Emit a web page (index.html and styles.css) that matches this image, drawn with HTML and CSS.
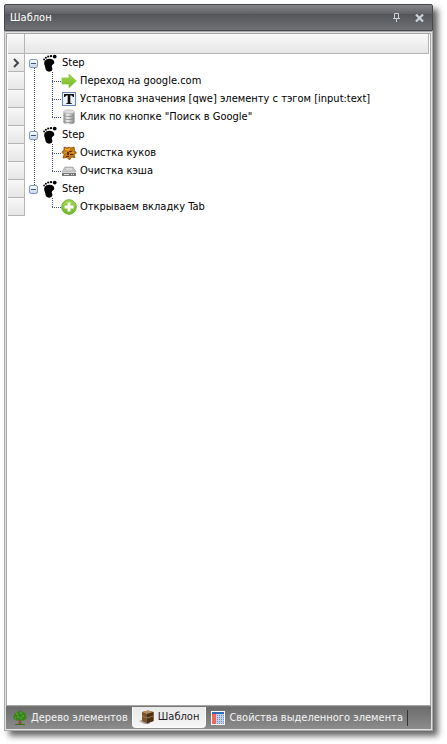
FILE: index.html
```
<!DOCTYPE html>
<html lang="ru">
<head>
<meta charset="utf-8">
<title>Шаблон</title>
<link rel="stylesheet" href="styles.css">
</head>
<body>
<svg width="0" height="0" class="defs" aria-hidden="true">
  <defs>
    <linearGradient id="green" x1="0" y1="0" x2="0" y2="1"><stop offset="0" stop-color="#a8d84a"/><stop offset="1" stop-color="#6fb52a"/></linearGradient>
    <linearGradient id="metal" x1="0" y1="0" x2="1" y2="0"><stop offset="0" stop-color="#8c8c8c"/><stop offset=".35" stop-color="#f2f2f2"/><stop offset="1" stop-color="#858585"/></linearGradient>
    <symbol id="foot" viewBox="1 0 16 18">
      <path d="M6.2 5C9.200 4.400 12.300 5.600 12.300 8.300c0 1.800-2.200 2.200-2.500 3.700-.2 1.300 1 2 .6 3.600C10 17.200 8 17.900 6.200 17.600 4.200 17.200 3.400 15.600 3.300 13.600 3.200 11.500 1.800 10.200 2.200 8.200 2.600 6.400 4.200 5.300 6.200 5z" fill="#000"/>
      <circle cx="12.700" cy="2.600" r="1.900"/><circle cx="9" cy="2.100" r="1.200"/><circle cx="6.200" cy="2.500" r="1.100"/><circle cx="3.900" cy="3.800" r="1"/><circle cx="2.100" cy="5.500" r=".9"/>
    </symbol>
  </defs>
</svg>
<main class="panel">
  <header class="title">
    <h1>Шаблон</h1>
    <button type="button" aria-label="Закрепить"><svg width="9" height="11" viewBox="0 0 9 11"><path d="M2.500 6V1.500h4V6M1 6.500h7M4.500 7v3" fill="none" stroke="#ccd2da"/></svg></button>
    <button type="button" aria-label="Закрыть"><svg width="9" height="8" viewBox="0 0 9 8"><path d="M1 .5l7 7M8 .5l-7 7" fill="none" stroke="#ccd2da" stroke-width="2.200"/></svg></button>
  </header>
  <div class="frame">
    <section class="list">
      <div class="head"><span class="corner"></span></div>
      <div class="row">
        <span class="cell"><svg width="7" height="10" viewBox="0 0 7 10"><path d="M1 1l4 4-4 4" fill="none" stroke="#444" stroke-width="2"/></svg></span>
        <span class="guide from"><button type="button" class="toggle" aria-label="Свернуть"></button></span>
        <svg class="foot"><use href="#foot"/></svg><span class="label">Step</span>
      </div>
      <div class="row">
        <span class="cell"></span><span class="guide through"></span><span class="guide through branch"></span>
        <svg class="icon" viewBox="0 0 16 16"><path d="M1 5h7V1.200L15.300 8 8 14.800V11H1z" fill="url(#green)" stroke="#86c23a" stroke-width=".7"/></svg>
        <span class="label">Переход на google.com</span>
      </div>
      <div class="row">
        <span class="cell"></span><span class="guide through"></span><span class="guide through branch"></span>
        <svg class="icon" viewBox="0 0 16 16"><rect x="1.500" y="1.500" width="13" height="13" fill="#edf3fa" stroke="#6689bd"/><path d="M3 3h10v3h-1Q11.500 4.200 9.300 4.200V12l1.700.4v.6H5v-.6l1.700-.4V4.200Q4.500 4.200 4 6H3z" fill="#111"/></svg>
        <span class="label">Установка значения [qwe] элементу с тэгом [input:text]</span>
      </div>
      <div class="row">
        <span class="cell"></span><span class="guide through"></span><span class="guide to branch"></span>
        <svg class="icon" viewBox="0 0 16 16"><path d="M2.500 3v10.500c0 2.500 11 2.500 11 0V3z" fill="url(#metal)"/><path d="M2.500 6c0 2 11 2 11 0M2.500 9c0 2 11 2 11 0M2.500 12c0 2 11 2 11 0" fill="none" stroke="#888" stroke-width=".8"/><ellipse cx="8" cy="2.800" rx="5.500" ry="1.900" fill="#ddd" stroke="#aaa" stroke-width=".6"/></svg>
        <span class="label">Клик по кнопке "Поиск в Google"</span>
      </div>
      <div class="row">
        <span class="cell"></span><span class="guide through"><button type="button" class="toggle" aria-label="Свернуть"></button></span>
        <svg class="foot"><use href="#foot"/></svg><span class="label">Step</span>
      </div>
      <div class="row">
        <span class="cell"></span><span class="guide through"></span><span class="guide through branch"></span>
        <svg class="icon" viewBox="0 0 16 16"><path d="M3 2l3 1 2-1 2 1 3-1 .5 3.500L15.500 8 13 9.500l1 3-3.500-.5L8.500 15 6 12.500l-4 .5 1-3.500L.8 7 3 5z" fill="#c57812" stroke="#8d4d08" stroke-width=".8"/><path d="M4 4l3 1 2-1.500" stroke="#f4b83c" stroke-width="1.200" fill="none"/><path d="M3 8l3-1M10 7l3 1" stroke="#e09a26" stroke-width="1.200" fill="none"/><path d="M6 7h2v3H6zM9 9h3v1H9zM8 6h3v1H8zM5 11h3v1H5z" fill="#5b2c05"/></svg>
        <span class="label">Очистка куков</span>
      </div>
      <div class="row">
        <span class="cell"></span><span class="guide through"></span><span class="guide to branch"></span>
        <svg class="icon" viewBox="0 0 16 16"><path d="M4 4h8l3 5H1z" fill="#c4c4c4" stroke="#999" stroke-width=".6"/><path d="M1 9h14v4H1z" fill="#777"/><path d="M1 9.300h14" stroke="#f0f0f0"/><path d="M3 11.500h5M10 11.500h1M12 11.500h1" stroke="#e5e5e5"/><path d="M5 6h6" stroke="#f2f2f2"/></svg>
        <span class="label">Очистка кэша</span>
      </div>
      <div class="row">
        <span class="cell"></span><span class="guide to"><button type="button" class="toggle" aria-label="Свернуть"></button></span>
        <svg class="foot"><use href="#foot"/></svg><span class="label">Step</span>
      </div>
      <div class="row">
        <span class="cell"></span><span class="guide"></span><span class="guide to branch"></span>
        <svg class="icon" viewBox="0 0 16 16"><circle cx="8" cy="8" r="7.300" fill="url(#green)" stroke="#6fb038"/><path d="M6.500 3.500h3v3h3v3h-3v3h-3v-3h-3v-3h3z" fill="#fff"/></svg>
        <span class="label">Открываем вкладку Tab</span>
      </div>
    </section>
    <nav class="tabs">
      <button type="button" class="tab">
        <svg class="icon" viewBox="0 0 16 16"><path d="M7 8h2l.3 5 2 1.500h-7L6.800 13z" fill="#8a5122"/><path d="M3 14.500h10" stroke="#397317"/><path d="M5 2.500Q8-.5 11 2q3 .5 3 3.500 1.500 3-1.500 4.500Q10 11.500 8 10q-3 1.500-5-.5Q0 8 2 5.500 2 3 5 2.500z" fill="#37851b"/><path d="M4 4h2M8 3h2M10 6h2M5 7h2M3 8h1M8 8h2" stroke="#65b833" stroke-width="1.200"/></svg>
        <span>Дерево элементов</span>
      </button>
      <button type="button" class="tab active">
        <svg class="icon" viewBox="0 0 16 16"><path d="M0 12l5-2 6 5H5z" fill="#aaa"/><path d="M3 3l6-1.500L14.500 3v9L8 14.500 3 12z" fill="#79552f"/><path d="M3 3l6-1.500L14.500 3 8 5z" fill="#b58d5c"/><path d="M8 5l6.500-2v9L8 14.500z" fill="#4c3118"/><path d="M3 7l5 2 6.500-2" fill="none" stroke="#a37b4b"/></svg>
        <span>Шаблон</span>
      </button>
      <button type="button" class="tab">
        <svg class="icon" viewBox="0 0 16 16"><path d="M1 1h14v14H1z" fill="#fff"/><path d="M2 2h12v2H2z" fill="#3568b8"/><path d="M2 4h4v10H2z" fill="#f0685c"/><path d="M6 4h8v10H6z" fill="#c3d2ec"/><path d="M7.500 5v9M9.500 5v9M11.500 5v9M13.500 5v9" stroke="#6f8cc4" stroke-dasharray="1 1"/></svg>
        <span>Свойства выделенного элемента</span>
      </button>
      <span class="divider"></span>
    </nav>
  </div>
</main>
</body>
</html>
```
FILE: styles.css
```
* { box-sizing: border-box; }

body {
  margin: 0;
  min-height: 100vh;
  padding: 4px 14px 13px 4px;
  display: flex;
  background: #fff;
  font: 11px/18px "DejaVu Sans Condensed", "DejaVu Sans", sans-serif;
  color: #000;
}

.defs { position: absolute; }

button {
  border: 0;
  padding: 0;
  background: none;
  font: inherit;
  color: inherit;
}

.panel {
  flex: 1;
  min-width: 0;
  display: flex;
  flex-direction: column;
  box-shadow: 5px 5px 6px rgba(0, 0, 0, .6);
}

.title {
  height: 27px;
  display: flex;
  align-items: center;
  gap: 14px;
  padding: 0 8px 0 5px;
  border: 1px solid #464850;
  border-radius: 2px 2px 0 0;
  background: linear-gradient(#85868a, #616266 35%, #545559 36%, #707175);
  color: #fff;
}

.title h1 {
  flex: 1;
  margin: 0;
  font-size: 11px;
  font-weight: normal;
}

.title button { display: flex; }

.frame {
  flex: 1;
  display: flex;
  flex-direction: column;
  padding: 1px;
  border: 1px solid #aaa;
  background: #e2e4e3;
}

.list {
  flex: 1;
  padding: 0 1px;
  border: 1px solid #a5a5a5;
  background: #fff;
  overflow: hidden;
}

.head {
  height: 20px;
  display: flex;
  border-bottom: 1px solid #b5b5b5;
  border-right: 1px solid #b5b5b5;
  background: linear-gradient(#fafafa, #e6e6e6);
}

.corner {
  width: 17px;
  border-right: 1px solid #b5b5b5;
}

.row {
  height: 18px;
  display: flex;
  align-items: center;
  white-space: nowrap;
}

.cell {
  flex: none;
  width: 17px;
  height: 18px;
  display: flex;
  align-items: center;
  justify-content: center;
  border-right: 1px solid #b5b5b5;
  border-bottom: 1px solid #b5b5b5;
  background: linear-gradient(#f8f8f8, #e6e6e6);
}

.guide {
  --dots-y: repeating-linear-gradient(#42547c 0 1px, transparent 1px 2px);
  --dots-x: repeating-linear-gradient(90deg, #42547c 0 1px, transparent 1px 2px);
  flex: none;
  width: 18px;
  height: 18px;
  display: flex;
  align-items: center;
  padding-left: 4px;
  background-repeat: no-repeat;
}

.through { background-image: var(--dots-y); background-size: 1px 18px; background-position: 9px 0; }
.to { background-image: var(--dots-y); background-size: 1px 10px; background-position: 9px 0; }
.from { background-image: var(--dots-y); background-size: 1px 8px; background-position: 9px 10px; }

.branch { background-image: var(--dots-y), var(--dots-x); background-position: 9px 0, 9px 9px; }
.through.branch { background-size: 1px 18px, 9px 1px; }
.to.branch { background-size: 1px 10px, 9px 1px; }

.toggle {
  flex: none;
  width: 9px;
  height: 9px;
  border: 1px solid #8497bc;
  border-radius: 2px;
  background: linear-gradient(#3c5585, #3c5585) center / 5px 1px no-repeat, linear-gradient(#fff, #c9d6eb);
}

.foot {
  flex: none;
  width: 16px;
  height: 18px;
  margin-right: 2px;
}

.icon {
  flex: none;
  width: 16px;
  height: 16px;
}

.label { padding-left: 1px; }
.icon + .label { padding-left: 3px; }

.tabs {
  height: 23px;
  display: flex;
  padding-left: 2px;
  border-top: 1px solid #777;
  background: linear-gradient(#6c6c6c, #8c8c8c);
  color: #f4f4f4;
  white-space: nowrap;
}

.tab {
  display: flex;
  align-items: center;
  gap: 3px;
  padding: 0 4px;
}

.active {
  margin-bottom: 1px;
  padding: 0 6px;
  border: 1px solid #fafafa;
  border-top: 0;
  border-radius: 0 0 4px 4px;
  background: linear-gradient(#e8e8e8, #f6f6f6);
  color: #222;
}

.divider {
  width: 1px;
  margin: 3px 0;
  background: #333;
}
```
